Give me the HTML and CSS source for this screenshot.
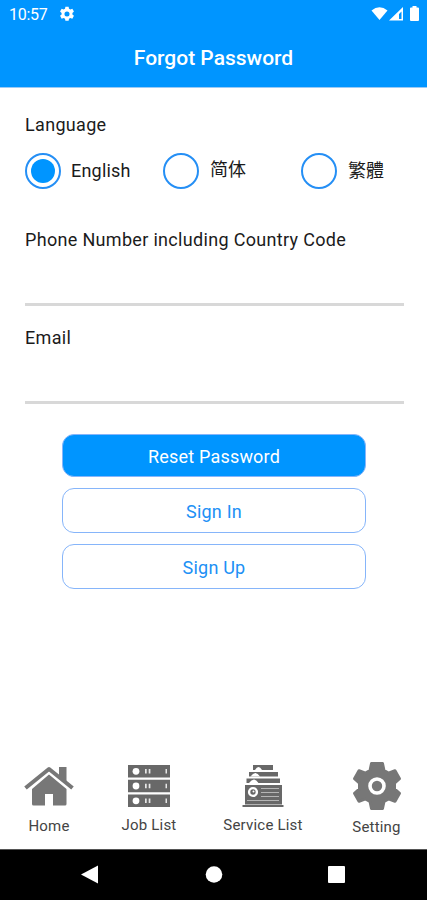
FILE: index.html
```html
<!DOCTYPE html>
<html lang="en">
<head>
    <title>Forgot Password</title>
    <meta charset="UTF-8">
    <meta name="viewport" content="width=device-width, initial-scale=1">
    <link rel="stylesheet" href="styles.css">
</head>
<body>
    <header class="header">
        <div class="status-bar">
            <span class="clock">10:57</span>
            <svg class="status-gear" width="16" height="16" viewBox="0 0 24 24">
                <path fill="#fff" fill-rule="evenodd" d="M9.6 1h4.8l.6 3 2 1.2 3-1 2.400 4.200-2.300 2v2.400l2.300 2-2.400 4.200-3-1-2 1.200-.6 3H9.600l-.6-3-2-1.200-3 1-2.400-4.200 2.300-2v-2.400l-2.300-2L4 4.200l3 1L9 4zM12 8.200a3.800 3.800 0 1 0 0 7.600 3.800 3.800 0 0 0 0-7.600z"/>
            </svg>
            <svg class="status-signal" width="50" height="16" viewBox="0 0 50 16">
                <path fill="#fff" d="M.5 4.500Q8.500-2 16.500 4.500L8.500 14z"/>
                <path fill="#fff" fill-rule="evenodd" d="M32 1v13.500H18zM30.500 5.500L28 8v5h2.500z"/>
                <path fill="#fff" d="M41.500 0h4v1.500h1.500q1 0 1 1V14q0 1-1 1h-7q-1 0-1-1V2.500q0-1 1-1h1.500z"/>
            </svg>
        </div>
        <h1 class="title">Forgot Password</h1>
    </header>

    <main class="form">
        <div class="label">Language</div>
        <div class="languages">
            <label class="language">
                <input type="radio" name="language" value="en" checked>
                <span>English</span>
            </label>
            <label class="language">
                <input type="radio" name="language" value="sc">
                <span class="chinese" lang="zh-Hans">简体</span>
            </label>
            <label class="language">
                <input type="radio" name="language" value="tc">
                <span class="chinese" lang="zh-Hant">繁體</span>
            </label>
        </div>

        <label class="label" for="phone">Phone Number including Country Code</label>
        <input class="field" type="tel" id="phone">
        <label class="label" for="email">Email</label>
        <input class="field" type="email" id="email">

        <div class="actions">
            <button class="primary">Reset Password</button>
            <button>Sign In</button>
            <button>Sign Up</button>
        </div>
    </main>

    <nav class="tabs">
        <a class="tab">
            <svg width="50" height="42" viewBox="0 0 50 42">
                <path fill="none" stroke="#777" stroke-width="4" stroke-linejoin="round" d="M1.500 23L25 4l23.500 19"/>
                <path fill="#777" d="M35 2h7.500v16L35 12zM25 9.500L42.500 24v15q0 1.500-1.500 1.500H29V29h-8v11.500H9.500Q8 40.500 8 39V24z"/>
            </svg>
            <span>Home</span>
        </a>
        <a class="tab">
            <svg width="42" height="42" viewBox="0 0 42 42">
                <g id="server">
                    <path fill="#686868" d="M0 0h42v12.500H0z"/>
                    <circle cx="8" cy="6.300" r="3.400" fill="#fff"/>
                    <path fill="#e6e6e6" d="M17 4h1.700v4.500H17zM20.700 4h1.700v4.500h-1.700zM37.500 4h1.500v4.500h-1.500z"/>
                </g>
                <use href="#server" y="14.700"/>
                <use href="#server" y="29.500"/>
            </svg>
            <span>Job List</span>
        </a>
        <a class="tab">
            <svg width="42" height="42" viewBox="0 0 42 42">
                <path fill="#686868" d="M11 0h20v5H11zM7 7h29v4.500H7zM4.500 13.500H38V18H4.500zM3 20h37v19.500H3zM.5 40h41v2H.5z"/>
                <path fill="#fff" d="M13 5q3.500-6 7 0zM8.500 11.500q5-7 9.500 0zM7 18q5-7 9.500 0z"/>
                <path stroke="#b5b5b5" d="M19 23.500h18M19 27.500h18M19 31.500h18M5 35.500h32"/>
                <circle cx="11" cy="27" r="3.900" fill="#686868" stroke="#fff" stroke-width="2.400"/>
                <circle cx="11.500" cy="26.500" r="1" fill="#fff"/>
            </svg>
            <span>Service List</span>
        </a>
        <a class="tab">
            <svg width="50" height="50" viewBox="0 0 50 50">
                <path fill="#777" stroke="#777" stroke-width="3" stroke-linejoin="round" d="M19.500 2.500h11l1.500 7 4.500 2.600 6.500-2.400 4.500 8L42.500 22v6l5 4.300-4.500 8-6.500-2.400-4.500 2.600-1.500 7h-11l-1.500-7-4.500-2.600L7 40.300l-4.500-8 5-4.300v-6l-5-4.300 4.500-8 6.500 2.400L18 9.500z"/>
                <circle cx="25" cy="25" r="7" fill="none" stroke="#fff" stroke-width="3.600"/>
            </svg>
            <span>Setting</span>
        </a>
    </nav>

    <div class="system-nav">
        <svg width="18" height="20" viewBox="0 0 18 20"><path fill="#fff" d="M17 .5v18L0 9.500z"/></svg>
        <svg width="18" height="20" viewBox="0 0 18 20"><circle cx="9" cy="9.500" r="8.300" fill="#fff"/></svg>
        <svg width="18" height="20" viewBox="0 0 18 20"><rect y="1" width="17" height="17" rx="1" fill="#fff"/></svg>
    </div>
</body>
</html>
```

FILE: styles.css
```css
:root {
    --blue: #0095ff;
    --outline: #86b5fa;
    --line: #d8d8d8;
}

* {
    box-sizing: border-box;
}

body {
    display: flex;
    flex-direction: column;
    height: 900px;
    margin: 0;
    font-family: Roboto, "Noto Sans CJK SC", sans-serif;
    font-size: 18px;
    color: #1b1b1b;
    background: #fff;
}

.header {
    height: 88px;
    color: #fff;
    background: var(--blue);
    border-bottom: 1px solid #9bcaf5;
}

.status-bar {
    display: flex;
    align-items: center;
    height: 28px;
    padding: 0 6px 0 9px;
}

.clock {
    width: 50px;
    font-size: 16px;
    letter-spacing: -0.3px;
}

.status-signal {
    margin-left: auto;
}

.title {
    margin: 18px 0 0;
    font-size: 21px;
    font-weight: 500;
    line-height: 24px;
    text-align: center;
}

.form {
    flex: 1;
    padding: 26px 23px 0 25px;
}

.label {
    display: block;
    line-height: 22px;
    letter-spacing: 0.32px;
}

.languages {
    display: grid;
    grid-template-columns: 138px 138px 1fr;
    margin: 16px 0 40px;
}

.language {
    display: flex;
    align-items: center;
    gap: 10px;
    height: 37px;
    letter-spacing: 0.2px;
}

.language input {
    appearance: none;
    width: 36px;
    height: 36px;
    margin: 0;
    padding: 4px;
    border: 2px solid #258ff5;
    border-radius: 50%;
}

.language input:checked {
    background: var(--blue) content-box;
}

.chinese {
    height: 26px;
    padding-left: 1px;
    line-height: 24px;
    letter-spacing: 0;
}

.chinese:lang(zh-Hant) {
    height: 28px;
    font-family: "Noto Sans CJK TC", sans-serif;
}

.field {
    display: block;
    width: 100%;
    height: 55px;
    margin-bottom: 21px;
    padding: 0;
    font: inherit;
    border: 0;
    border-bottom: 3px solid var(--line);
    outline: 0;
}

.actions {
    display: flex;
    flex-direction: column;
    gap: 11px;
    margin: 30px 38px 0 37px;
}

button {
    height: 45px;
    padding: 2px 0 0;
    font: inherit;
    letter-spacing: 0.2px;
    color: #2090f5;
    background: #fff;
    border: 1px solid var(--outline);
    border-radius: 12px;
}

button.primary {
    height: 43px;
    color: #fff;
    background: var(--blue);
}

.tabs {
    display: grid;
    grid-template-columns: 98px 102px 126px 1fr;
    height: 90px;
    font-size: 15px;
    color: #444;
    letter-spacing: 0.2px;
}

.tab {
    display: flex;
    flex-direction: column;
    align-items: center;
    padding-top: 6px;
}

.tab:last-child {
    padding-top: 2px;
}

.tab span {
    margin-top: 9px;
    line-height: 18px;
}

.tab:first-child span {
    margin-top: 10px;
}

.tab:last-child span {
    margin-top: 7px;
}

.system-nav {
    display: flex;
    justify-content: space-between;
    align-items: center;
    height: 51px;
    padding: 0 81px;
    background: #000;
    border-top: 1px solid #555;
}
```
